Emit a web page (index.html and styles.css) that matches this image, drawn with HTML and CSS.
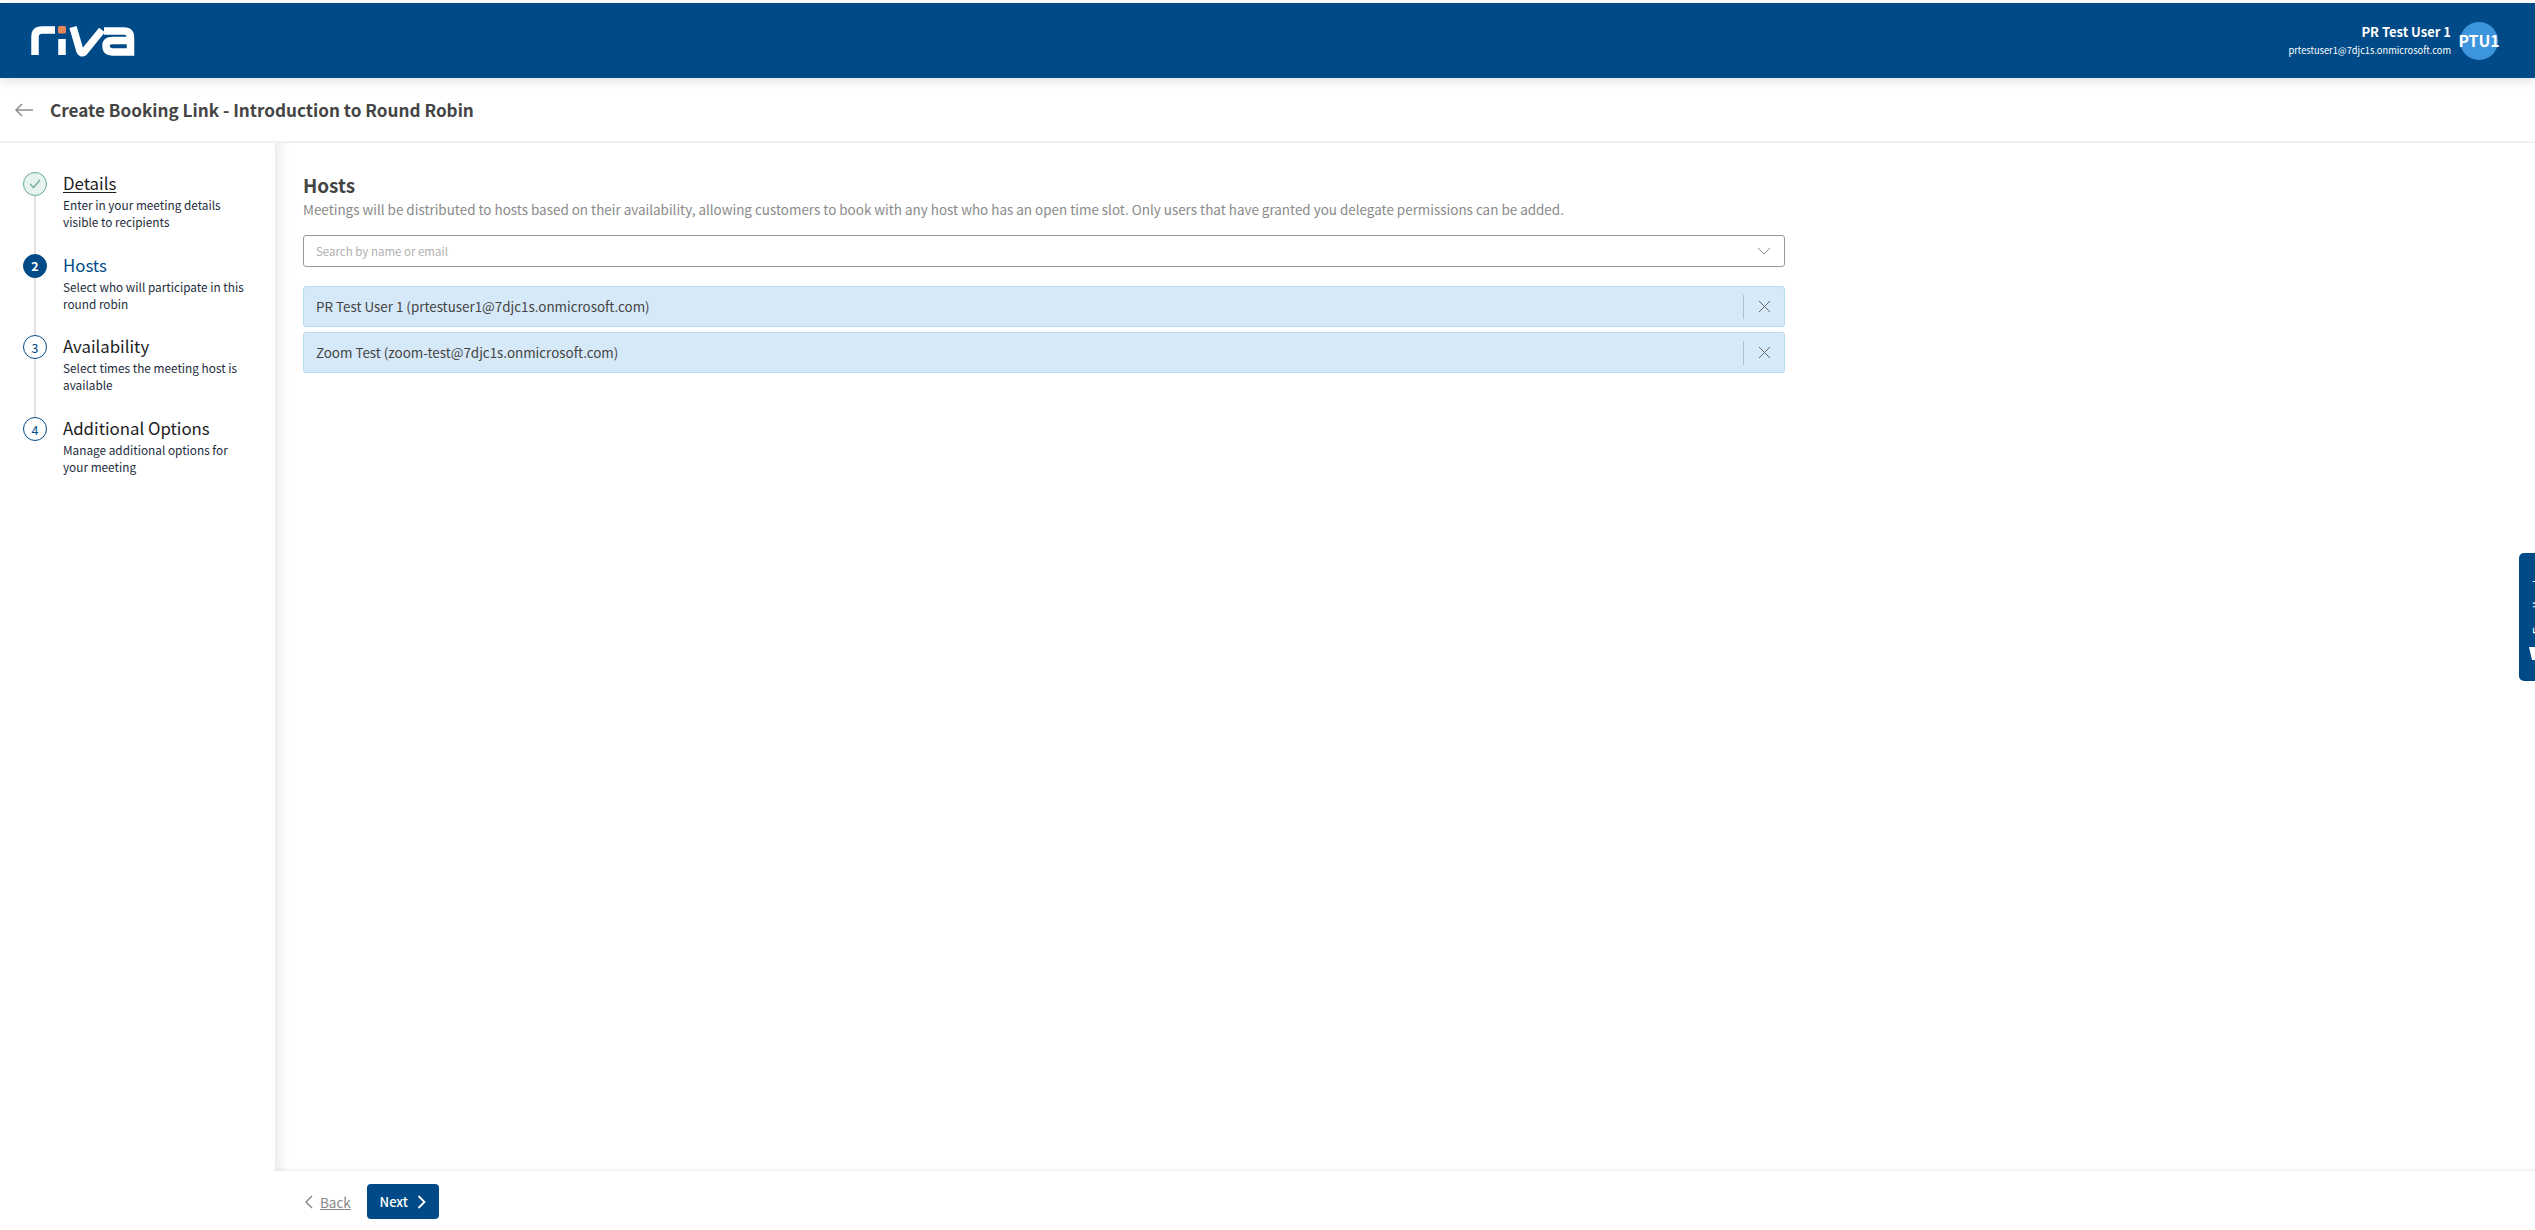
FILE: index.html
```html
<!DOCTYPE html>
<html lang="en">
<head>
<meta charset="utf-8">
<title>Create Booking Link</title>
<link rel="stylesheet" href="styles.css">
</head>
<body>
<header class="topbar">
  <svg class="logo" width="106" height="32" viewBox="0 0 106 32" aria-label="riva">
    <path class="logo-w" d="M5 30V12Q5 5 12 5H25"/>
    <rect x="28" y="1" width="8" height="7.5" rx="1.5" fill="#e8875a"/>
    <path class="logo-w" d="M32 14V30"/>
    <path class="logo-w" d="M43 2L50 26Q51.500 29 54 27L72 5"/>
    <path class="logo-w" d="M74 5H94Q100.500 5 100.500 12V26H83Q76 26 76 19.500Q76 14.500 83 14.500H100" transform="translate(0 1)"/>
  </svg>
  <div class="user">
    <div class="user-text">
      <div class="user-name">PR Test User 1</div>
      <div class="user-mail">prtestuser1@7djc1s.onmicrosoft.com</div>
    </div>
    <div class="avatar">PTU1</div>
  </div>
</header>
<div class="titlebar">
  <svg class="back-arrow" width="18" height="14" viewBox="0 0 18 14"><path d="M18 7H1M7 1L1 7L7 13"/></svg>
  <h1 class="page-title">Create Booking Link - Introduction to Round Robin</h1>
</div>
<div class="body-row">
  <nav class="steps">
    <div class="step">
      <div class="marker done"><svg width="12" height="10" viewBox="0 0 12 10"><path d="M1 5L4.500 8.500L11 1"/></svg></div>
      <div class="step-text">
        <div class="step-title underlined">Details</div>
        <div class="step-desc">Enter in your meeting details visible to recipients</div>
      </div>
    </div>
    <div class="step">
      <div class="marker current">2</div>
      <div class="step-text">
        <div class="step-title active">Hosts</div>
        <div class="step-desc">Select who will participate in this round robin</div>
      </div>
    </div>
    <div class="step">
      <div class="marker">3</div>
      <div class="step-text">
        <div class="step-title">Availability</div>
        <div class="step-desc">Select times the meeting host is available</div>
      </div>
    </div>
    <div class="step last">
      <div class="marker">4</div>
      <div class="step-text">
        <div class="step-title">Additional Options</div>
        <div class="step-desc">Manage additional options for your meeting</div>
      </div>
    </div>
  </nav>
  <div class="main-col">
    <main class="content">
      <h2 class="section-title">Hosts</h2>
      <p class="section-desc">Meetings will be distributed to hosts based on their availability, allowing customers to book with any host who has an open time slot. Only users that have granted you delegate permissions can be added.</p>
      <div class="search">
        <span class="placeholder">Search by name or email</span>
        <svg class="chev" width="14" height="8" viewBox="0 0 14 8"><path d="M1 1L7 7L13 1"/></svg>
      </div>
      <div class="chip">
        <span class="chip-text">PR Test User 1 (prtestuser1@7djc1s.onmicrosoft.com)</span>
        <span class="chip-remove"><svg width="13" height="13" viewBox="0 0 13 13"><path d="M1 1L12 12M12 1L1 12"/></svg></span>
      </div>
      <div class="chip">
        <span class="chip-text">Zoom Test (zoom-test@7djc1s.onmicrosoft.com)</span>
        <span class="chip-remove"><svg width="13" height="13" viewBox="0 0 13 13"><path d="M1 1L12 12M12 1L1 12"/></svg></span>
      </div>
    </main>
    <footer class="footer">
      <a class="back-link"><svg width="8" height="14" viewBox="0 0 8 14"><path d="M7 1L1 7L7 13"/></svg><span>Back</span></a>
      <button class="next">Next<svg width="9" height="14" viewBox="0 0 9 14"><path d="M1.500 1L7.500 7L1.500 13"/></svg></button>
    </footer>
  </div>
</div>
<div class="feedback">
  <span>Feedback</span>
  <svg width="16" height="15" viewBox="0 0 16 15"><path d="M0 0H16V13H3Z" fill="#fff"/><path d="M8 4H11M8 8H11" stroke="#004b87" stroke-width="2"/></svg>
</div>
</body>
</html>
```
FILE: styles.css
```css
* { box-sizing: border-box; }
html, body { margin: 0; height: 100%; }
body {
  height: 1230px;
  padding-top: 3px;
  display: flex;
  flex-direction: column;
  overflow: hidden;
  background: #fff;
  font-family: "Noto Sans CJK SC", "Noto Sans", sans-serif;
  color: #333;
}
.topbar {
  flex: 0 0 75px;
  background: #004b87;
  display: flex;
  align-items: center;
  justify-content: space-between;
  padding: 0 37px 0 30px;
  box-shadow: 0 3px 10px rgba(0,0,0,.12);
  position: relative;
  z-index: 3;
}
.logo { margin-top: 1px; }
.logo-w { fill: none; stroke: #fff; stroke-width: 7.500; }
.user { display: flex; align-items: center; gap: 9px; color: #fff; }
.user-text { text-align: right; }
.user-name { font-size: 13px; font-weight: 600; line-height: 20px; }
.user-mail { font-size: 9.300px; line-height: 17px; }
.avatar {
  width: 38px;
  height: 38px;
  border-radius: 50%;
  background: #3d96dd;
  display: flex;
  align-items: center;
  justify-content: center;
  font-size: 15.800px;
  font-weight: 600;
  white-space: nowrap;
}
.titlebar {
  flex: 0 0 65px;
  display: flex;
  align-items: center;
  gap: 17px;
  padding-left: 15px;
  border-bottom: 2px solid #f0f0f0;
}
.back-arrow path { fill: none; stroke: #8c8c8c; stroke-width: 1.500; }
.page-title { margin: 0; font-size: 17.150px; font-weight: 600; color: #444; }
.body-row { flex: 1; display: flex; min-height: 0; }
.steps { flex: 0 0 275px; padding: 29px 0 0 23px; }
.step { display: flex; gap: 16px; height: 81.700px; position: relative; }
.step::before {
  content: "";
  position: absolute;
  left: 11px;
  top: 24px;
  bottom: 0;
  width: 2px;
  background: #e2e2e2;
}
.step.last::before { display: none; }
.marker {
  flex: 0 0 24px;
  height: 24px;
  border-radius: 50%;
  border: 1.500px solid #004b87;
  display: flex;
  align-items: center;
  justify-content: center;
  font-size: 12.500px;
  color: #004b87;
  background: #fff;
}
.marker.done { border-color: #67a98f; background: #e6f3ee; }
.marker.done path { fill: none; stroke: #67a98f; stroke-width: 1.200; }
.marker.current { background: #004b87; color: #fff; font-weight: 600; }
.step-text { width: 190px; }
.step-title { font-size: 16.800px; line-height: 23px; color: #1c1c1c; }
.step-title.underlined { text-decoration: underline; text-underline-offset: 2px; text-decoration-thickness: 1px; }
.step-title.active { color: #004b87; }
.step-desc { font-size: 11.800px; line-height: 17px; margin-top: 1px; color: #1d2c3c; }
.main-col {
  flex: 1;
  display: flex;
  flex-direction: column;
  min-width: 0;
}
.content {
  flex: 1;
  padding: 28px 0 0 28px;
  box-shadow: inset 14px 0 14px -10px rgba(0,0,0,.09), inset 0 -4px 4px -3px rgba(0,0,0,.08);
}
.section-title { margin: 0; font-size: 18.900px; font-weight: 600; line-height: 28px; color: #444; }
.section-desc { margin: 0; font-size: 13.450px; line-height: 21px; color: #8a8a8a; white-space: nowrap; }
.search {
  width: 1482px;
  height: 32px;
  margin-top: 15px;
  border: 1px solid #999;
  border-radius: 3px;
  display: flex;
  align-items: center;
  justify-content: space-between;
  padding: 0 13px 0 12px;
}
.placeholder { font-size: 11.500px; color: #b0b0b0; padding-bottom: 1px; }
.chev path { fill: none; stroke: #8c8c8c; stroke-width: 1; }
.chip {
  width: 1482px;
  height: 41px;
  margin-top: 5px;
  background: #d6e9f8;
  border: 1px solid #b7daf5;
  border-radius: 3px;
  display: flex;
  align-items: center;
  justify-content: space-between;
  padding-left: 12px;
}
.search + .chip { margin-top: 19px; }
.chip-text { font-size: 13.400px; color: #444; padding-bottom: 2px; }
.chip-remove {
  width: 41px;
  height: 24px;
  border-left: 1px solid #b4bfc8;
  display: flex;
  align-items: center;
  justify-content: center;
}
.chip-remove path { fill: none; stroke: #666; stroke-width: 1; }
.footer {
  flex: 0 0 59px;
  display: flex;
  align-items: center;
  gap: 16px;
  padding: 2px 0 0 30px;
}
.back-link {
  display: flex;
  align-items: center;
  gap: 7px;
  color: #888;
  font-size: 13.500px;
  text-decoration: underline;
}
.back-link path { fill: none; stroke: #888; stroke-width: 1.500; }
.next {
  width: 72px;
  height: 35px;
  background: #004b87;
  border: 0;
  border-radius: 4px;
  color: #fff;
  font: 500 13px "Noto Sans CJK SC", "Noto Sans", sans-serif;
  display: flex;
  align-items: center;
  justify-content: center;
  gap: 9px;
}
.next path { fill: none; stroke: #fff; stroke-width: 1.800; }
.feedback {
  position: absolute;
  right: -20px;
  top: 553px;
  width: 36px;
  height: 128px;
  background: #004b87;
  border-radius: 5px 0 0 5px;
  color: #fff;
  display: flex;
  flex-direction: column;
  align-items: center;
  justify-content: flex-end;
  padding-bottom: 19px;
  gap: 13px;
  font-size: 13px;
}
.feedback span { writing-mode: vertical-rl; transform: rotate(180deg); }
```
